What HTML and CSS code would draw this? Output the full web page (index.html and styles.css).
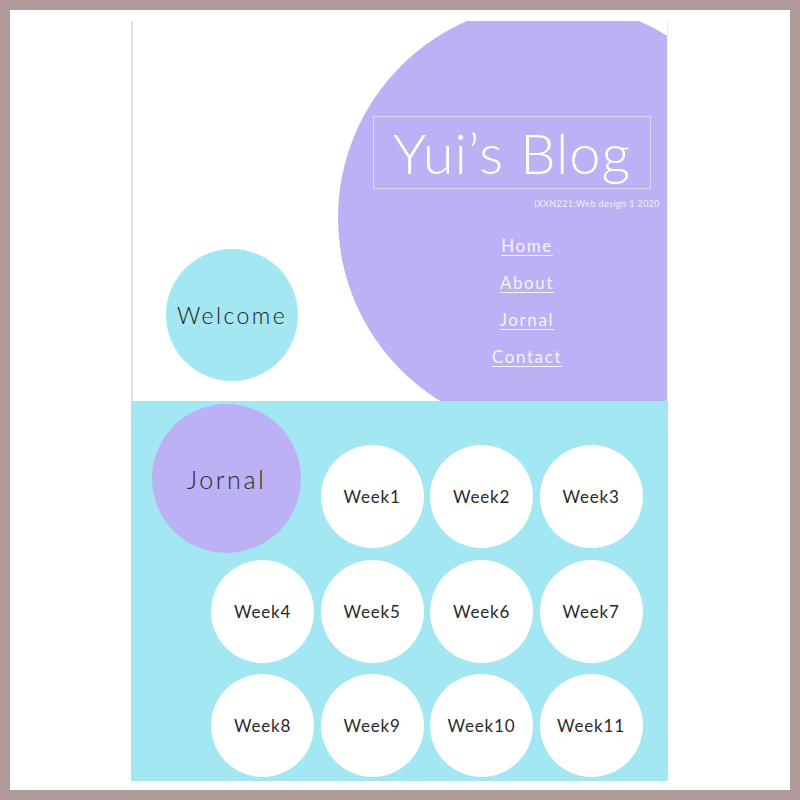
FILE: index.html
```html
<!DOCTYPE html>
<html lang="en">
<head>
  <meta charset="UTF-8" />
  <meta name="viewport" content="width=device-width, initial-scale=1" />
  <title>Yui's Blog</title>
  <link rel="stylesheet" href="styles.css">
</head>
<body>
  <div class="frame">
    <div class="page">
      <header class="top">
        <div class="welcome">Welcome</div>

        <div class="hero">
          <h1 class="title">Yui’s Blog</h1>
          <p class="course">iXXN221:Web design 1 2020</p>
          <nav class="menu">
            <a href="#">Home</a>
            <a href="#">About</a>
            <a href="#">Jornal</a>
            <a href="#">Contact</a>
          </nav>
        </div>
      </header>

      <!-- weekly posts -->
      <section class="jornal">
        <div class="weeks">
          <div class="bubble big">Jornal</div>
          <a href="#" class="bubble">Week1</a>
          <a href="#" class="bubble">Week2</a>
          <a href="#" class="bubble">Week3</a>
          <a href="#" class="bubble">Week4</a>
          <a href="#" class="bubble">Week5</a>
          <a href="#" class="bubble">Week6</a>
          <a href="#" class="bubble">Week7</a>
          <a href="#" class="bubble">Week8</a>
          <a href="#" class="bubble">Week9</a>
          <a href="#" class="bubble">Week10</a>
          <a href="#" class="bubble">Week11</a>
        </div>
      </section>
    </div>
  </div>
</body>
</html>
```

FILE: styles.css
```css
body {
  margin: 0;
  font-family: 'Lato', 'Noto Sans', sans-serif;
  color: #222;
}

.frame {
  width: 800px;
  height: 800px;
  box-sizing: border-box;
  border: 10px solid #b09a9a;
  background-color: #fff;
  padding: 11px 0 0 121px;
}

.page {
  width: 537px;
}

/* header with the big purple circle */
.top {
  height: 380px;
  box-sizing: border-box;
  border-left: 2px solid #e2e2e2;
  border-right: 1px solid #eeeeee;
  display: flex;
  align-items: flex-start;
  overflow: hidden;
}

.welcome {
  flex-shrink: 0;
  width: 132px;
  height: 132px;
  margin: 228px 0 0 33px;
  border-radius: 50%;
  background-color: #a2e7f1;
  display: flex;
  align-items: center;
  justify-content: center;
  font-size: 23px;
  font-weight: 300;
  letter-spacing: 2.4px;
}

.hero {
  flex-shrink: 0;
  width: 430px;
  height: 430px;
  margin: -18px 0 0 40px;
  padding: 113px 0 0 35px;
  box-sizing: border-box;
  border-radius: 50%;
  background-color: #bcb1f4;
}

.title {
  width: 278px;
  height: 73px;
  box-sizing: border-box;
  margin: 0;
  border: 1px solid rgba(255, 255, 255, 0.5);
  color: #fff;
  font-size: 56px;
  font-weight: 300;
  line-height: 71px;
  text-align: center;
  letter-spacing: 1px;
}

.course {
  width: 287px;
  margin: 9px 0 0;
  font-size: 9px;
  line-height: 12px;
  letter-spacing: 0.4px;
  color: rgba(255, 255, 255, 0.8);
  text-align: right;
}

.menu {
  width: 308px;
  margin-top: 26px;
  display: flex;
  flex-direction: column;
  align-items: center;
  gap: 17px;
}

.menu a {
  color: #f6f2ff;
  font-size: 17px;
  line-height: 20px;
  letter-spacing: 1.6px;
  text-decoration: underline;
  text-underline-offset: 3px;
}

/* week bubbles */
.jornal {
  height: 380px;
  background-color: #a2e7f1;
}

.weeks {
  margin-left: 80px;
  padding-top: 44px;
  display: grid;
  grid-template-columns: repeat(4, 103px);
  column-gap: 6.5px;
  row-gap: 11.5px;
}

.bubble {
  width: 103px;
  height: 103px;
  border-radius: 50%;
  background-color: #fff;
  display: flex;
  align-items: center;
  justify-content: center;
  color: #2a2a2a;
  font-size: 17px;
  letter-spacing: 0.8px;
  text-decoration: none;
}

.bubble.big {
  width: 149px;
  height: 149px;
  margin: -41px 0 -46px -59px;
  background-color: #bcb1f4;
  font-size: 25px;
  font-weight: 300;
  letter-spacing: 2.6px;
}
```
